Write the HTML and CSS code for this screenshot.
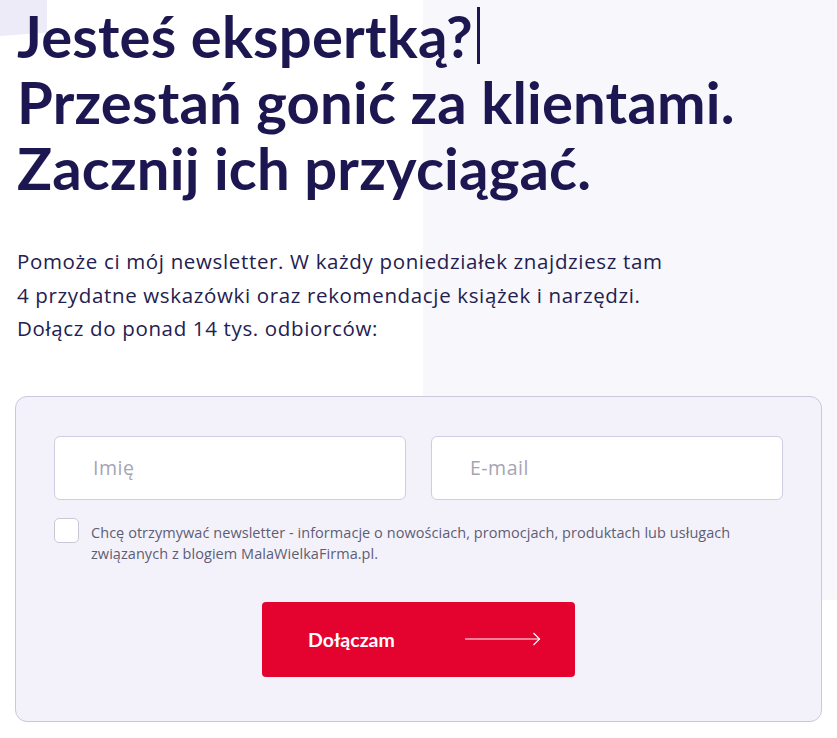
FILE: index.html
```html
<!DOCTYPE html>
<html lang="pl">
<head>
    <meta charset="UTF-8">
    <meta name="viewport" content="width=device-width, initial-scale=1.0">
    <title>Newsletter</title>
    <link rel="stylesheet" href="styles.css">
</head>
<body>
    <div class="corner-shape"></div>
    <div class="side-panel"></div>

    <main class="hero">
        <h1 class="hero-title">
            Jesteś ekspertką?<span class="caret"></span><br>
            Przestań gonić za klientami.<br>
            Zacznij ich przyciągać.
        </h1>
        <p class="hero-lead">
            Pomoże ci mój newsletter. W każdy poniedziałek znajdziesz tam<br>
            4 przydatne wskazówki oraz rekomendacje książek i narzędzi.<br>
            Dołącz do ponad 14 tys. odbiorców:
        </p>

        <form class="signup" onsubmit="return false">
            <div class="signup-fields">
                <input class="field" type="text" placeholder="Imię">
                <input class="field" type="email" placeholder="E-mail">
            </div>
            <label class="consent">
                <input class="consent-box" type="checkbox">
                <span>Chcę otrzymywać newsletter - informacje o nowościach, promocjach, produktach lub usługach związanych z blogiem MalaWielkaFirma.pl.</span>
            </label>
            <button class="submit" type="submit">
                <span>Dołączam</span>
                <svg class="submit-arrow" width="76" height="14" viewBox="0 0 76 14" fill="none" stroke="#fff" stroke-width="1.2">
                    <path d="M0 7H74.5"/>
                    <path d="M68.5 1L74.5 7L68.5 13"/>
                </svg>
            </button>
        </form>
    </main>
</body>
</html>
```

FILE: styles.css
```css
body {
    margin: 0;
    background: #fff;
    color: #1c1751;
    font-family: "Open Sans", "Noto Sans", sans-serif;
    position: relative;
    min-height: 738px;
    overflow: hidden;
}
.corner-shape {
    position: absolute;
    left: 0;
    top: 0;
    width: 47px;
    height: 36px;
    background: #ecebf7;
    clip-path: polygon(0 0, 100% 0, 100% 90%, 0 100%);
}
.side-panel {
    position: absolute;
    left: 423px;
    top: 0;
    right: 0;
    height: 600px;
    background: #f7f7fc;
}
.hero {
    position: relative;
    padding: 0 15px;
}
.hero-title {
    margin: 0;
    padding: 3px 0 0 2px;
    font-family: Lato, "Noto Sans", sans-serif;
    font-size: 58px;
    line-height: 66px;
    font-weight: 700;
    letter-spacing: 0.2px;
}
.caret {
    display: inline-block;
    width: 3px;
    height: 57px;
    margin-left: 4px;
    vertical-align: -6px;
    background: #1c1751;
}
.hero-lead {
    margin: 44px 0 0 2px;
    font-size: 20.5px;
    line-height: 33.5px;
    font-weight: 400;
    letter-spacing: 0.65px;
    color: #24204f;
}
.signup {
    margin-top: 50px;
    border: 1px solid #c9c8dd;
    border-radius: 12px;
    background: #f3f2fa;
    padding: 39px 38px 44px;
}
.signup-fields {
    display: grid;
    grid-template-columns: 1fr 1fr;
    gap: 25px;
}
.field {
    height: 64px;
    box-sizing: border-box;
    border: 1px solid #cfcde0;
    border-radius: 6px;
    background: #fff;
    padding: 0 38px;
    font-family: inherit;
    font-size: 19.5px;
    letter-spacing: 0.5px;
    color: #1c1751;
}
.field::placeholder {
    color: #a6a4b5;
}
.consent {
    display: flex;
    gap: 12px;
    margin-top: 18px;
    font-size: 14.5px;
    line-height: 21px;
    letter-spacing: 0.05px;
    color: #5f5d75;
}
.consent-box {
    appearance: none;
    flex: none;
    width: 25px;
    height: 25px;
    margin: 0;
    border: 1px solid #c9c8d9;
    border-radius: 5px;
    background: #fff;
}
.consent span {
    padding-top: 4px;
}
.submit {
    display: flex;
    align-items: center;
    justify-content: space-between;
    width: 313px;
    height: 75px;
    margin: 38px auto 0;
    padding: 0 34px 0 46px;
    border: none;
    border-radius: 4px;
    background: #e4032e;
    color: #fff;
    font-family: Lato, "Noto Sans", sans-serif;
    font-size: 19.5px;
    font-weight: 700;
    cursor: pointer;
}
```
